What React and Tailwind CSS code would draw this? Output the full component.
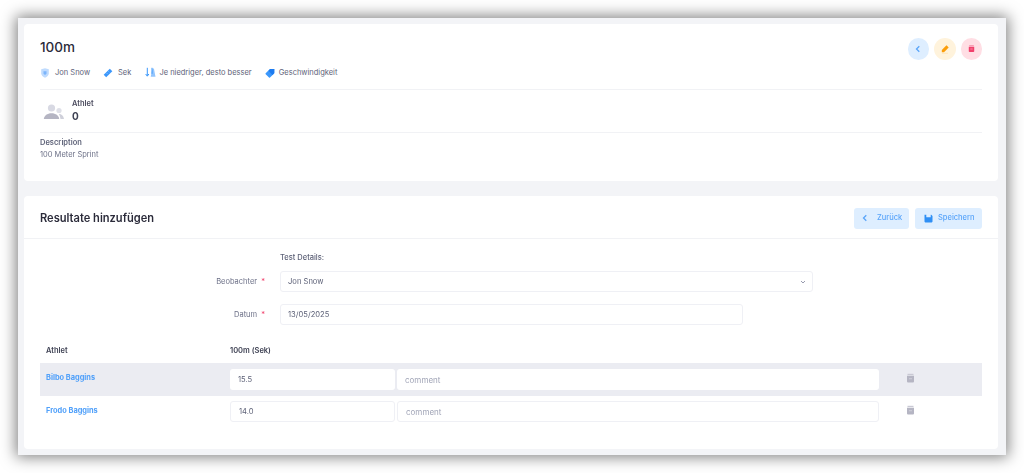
import React from "react";

const Shield = () => (
  <svg width="10" height="10" viewBox="0 0 10 10"><path d="M1.2 1.2 5 .3l3.8.9v4c0 2-1.8 3.6-3.8 4.5C3 8.800 1.200 7.200 1.200 5.200z" fill="#bfdbfe"/><path d="M3.500 3.200h3v2.600L5 7 3.500 5.800z" fill="#7cb5fb"/></svg>
);
const Ruler = () => (
  <svg width="10" height="10" viewBox="0 0 10 10"><path d="M6.800.7l2.500 2.500-6.100 6.100L.7 6.800z" fill="#3b97fb"/><path d="M5.300 3.300l1 1M3.600 5l1 1" stroke="#a8d2ff" strokeWidth=".6"/></svg>
);
const SortDown = () => (
  <svg width="11" height="11" viewBox="0 0 11 11" fill="none"><path d="M2.300.8v8M.7 7l1.600 2.200L3.900 7" stroke="#3b97fb" strokeWidth="1"/><path d="M5.700 9.800h4.800L8.900 1.500H7.500z" fill="#93c5fd"/><path d="M7 .8v6" stroke="#3b97fb" strokeWidth="1"/></svg>
);
const Tag = () => (
  <svg width="10" height="10" viewBox="0 0 10 10"><path d="M.7 5.300 4.900 1.100 9.300 1l-.1 4.400L5 9.600a.7.7 0 0 1-1 0L.7 6.300a.7.7 0 0 1 0-1z" fill="#3b97fb"/><path d="M5.200 1h4.100v4.100L7.500 6.900 3.500 2.800z" fill="#1d7bef"/></svg>
);
const Users = () => (
  <svg width="22" height="20" viewBox="0 0 22 20"><circle cx="8.500" cy="6" r="3.600" fill="#d8d9e3"/><circle cx="16" cy="8.500" r="2.600" fill="#dfe0e8"/><path d="M.8 17c.3-3.600 3.600-5.800 7.700-5.800S16 13.400 16.200 17z" fill="#b5b5c3"/><path d="M15.800 11.800c2.700.200 4.700 2 5.200 5.200h-3.500c-.2-2-.8-3.700-1.700-5.200z" fill="#cfd0da"/></svg>
);
const ChevL = ({ c = "#5aa5fa" }) => (
  <svg width="8" height="8" viewBox="0 0 8 8" fill="none"><path d="M5.300 1.300 2.500 4l2.800 2.700" stroke={c} strokeWidth="1.300"/></svg>
);
const Pencil = () => (
  <svg width="10" height="10" viewBox="0 0 10 10"><path d="M6.500 1.300l2.200 2.200-4.700 4.700H1.800V6z" fill="#fb9e0b"/><path d="M2 9.300h6" stroke="#ffe3b3" strokeWidth=".8"/></svg>
);
const Trash = ({ a = "#f1416c", b = "#f88aa5", w = 7, h = 9 }) => (
  <svg width={w} height={h} viewBox="0 0 9 10"><path d="M1 2.800h7v5.700a1 1 0 0 1-1 1H2a1 1 0 0 1-1-1z" fill={a}/><path d="M1.500.8h6v1.300h-6z" fill={b}/><path d="M3 5h3v1.300H3z" fill={b}/></svg>
);
const Save = () => (
  <svg width="9" height="9" viewBox="0 0 9 9"><path d="M.5.800h1.800v2.400h4.400V.8h.6L8.500 2v5.600a.8.800 0 0 1-.8.800H1.300a.8.800 0 0 1-.8-.8z" fill="#2f8ff5"/></svg>
);

const Meta = ({ icon, children, gap = "gap-[5px]", className = "" }) => (
  <div className={`flex items-center ${gap} ${className}`}>
    {icon}
    <span>{children}</span>
  </div>
);

const Round = ({ bg, children }) => (
  <div className={`w-[21.5px] h-[21.5px] rounded-full flex items-center justify-center ${bg}`}>{children}</div>
);

const Field = ({ className = "", value, placeholder, bordered }) => (
  <div className={`h-[21px] rounded-[3px] bg-white flex items-center px-[8px] ${bordered ? "border border-[#eff0f5]" : ""} ${placeholder ? "text-[8px] text-[#a1a5b7]" : "text-[7.6px] text-[#5e6278]"} ${className}`}>
    {value || placeholder}
  </div>
);

const Row = ({ name, value, shaded }) => (
  <div className={`h-[33px] flex items-center ${shaded ? "bg-[#ebecf2]" : "pb-[2px]"}`}>
    <div className={`w-[190px] pl-[6px] text-[7.4px] font-bold text-[#50a0fa] ${shaded ? "pb-[3px]" : "pb-[2px]"}`}>{name}</div>
    <Field className="w-[165px]" value={value} bordered={!shaded} />
    <Field className="w-[482px] ml-[2px]" placeholder="comment" bordered={!shaded} />
    <div className="ml-[27px] pb-[3px] flex">
      <Trash a="#b5b5c3" b="#c9c9d4" w={9} h={10} />
    </div>
  </div>
);

export default function App() {
  return (
    <div className="w-[1024px] h-[473px] bg-white p-[18px] font-['Inter','Liberation_Sans',sans-serif] overflow-hidden">
      <div className="h-[437px] bg-[#f3f4f7] pt-[6px] pl-[6px] pr-[8px] flex flex-col gap-[15px] shadow-[0_0_14px_2px_rgba(0,0,0,0.5)] blur-[0.5px]">
        <section className="h-[157px] bg-white rounded-[4px] px-[16px] pt-[14px] shrink-0">
          <div className="flex justify-between items-start">
            <h1 className="text-[13.5px] leading-[18px] font-medium text-[#2b2b3a]">100m</h1>
            <div className="flex gap-[5px]">
              <Round bg="bg-[#deeeff]"><ChevL /></Round>
              <Round bg="bg-[#fff3dc]"><Pencil /></Round>
              <Round bg="bg-[#ffdee4]"><Trash /></Round>
            </div>
          </div>
          <div className="mt-[3px] flex items-center gap-[13px] h-[20px] text-[7.5px] text-[#5e6278]">
            <Meta icon={<Shield />}>Jon Snow</Meta>
            <Meta icon={<Ruler />} gap="gap-[5px]">Sek</Meta>
            <Meta icon={<SortDown />} gap="gap-[3px]" className="ml-[1px]">Je niedriger, desto besser</Meta>
            <Meta icon={<Tag />} gap="gap-[4px]">Geschwindigkeit</Meta>
          </div>
          <div className="mt-[6px] h-[44px] border-y border-[#f1f2f5] flex items-center">
            <div className="ml-[3px] mt-[2px]"><Users /></div>
            <div className="ml-[7px]">
              <div className="text-[7.5px] leading-[11px] font-semibold text-[#4b4b5e]">Athlet</div>
              <div className="text-[10px] leading-[15px] font-bold text-[#3f4254]">0</div>
            </div>
          </div>
          <div className="mt-[4px] text-[7.5px] leading-[12px] font-semibold text-[#5e6278]">Description</div>
          <div className="text-[7.5px] leading-[12px] text-[#6c7087]">100 Meter Sprint</div>
        </section>

        <section className="h-[253px] bg-white rounded-[4px]">
          <div className="h-[43px] border-b border-[#f1f2f5] px-[16px] flex items-center justify-between">
            <h2 className="text-[11.1px] mt-[3px] font-semibold text-[#2b2b3a]">Resultate hinzufügen</h2>
            <div className="flex gap-[6px] text-[7.5px] font-medium text-[#5aa5fa] mt-[2px]">
              <button className="w-[55px] h-[21px] rounded-[3px] bg-[#deeeff] flex items-center pl-[7px] gap-[8px]"><ChevL />Zurück</button>
              <button className="w-[67px] h-[21px] rounded-[3px] bg-[#deeeff] flex items-center pl-[9px] gap-[5px]"><Save />Speichern</button>
            </div>
          </div>
          <div className="pt-[14px] px-[16px]">
            <div className="ml-[240px] text-[7.5px] leading-[10px] font-medium text-[#5e6278]">Test Details:</div>
            <div className="mt-[8px] flex items-center text-[7.5px] text-[#6c7087]">
              <div className="w-[225px] text-right">Beobachter <span className="text-[#f1416c] ml-[2px]">*</span></div>
              <div className="ml-[15px] w-[533px] h-[21px] rounded-[3px] border border-[#eff0f5] flex items-center justify-between pl-[7px] pr-[6px] text-[7.6px] text-[#5e6278]">
                Jon Snow
                <svg width="6" height="6" viewBox="0 0 6 6" fill="none"><path d="M1 2l2 2 2-2" stroke="#7e8299" strokeWidth=".8"/></svg>
              </div>
            </div>
            <div className="mt-[12px] flex items-center text-[7.5px] text-[#6c7087]">
              <div className="w-[225px] text-right">Datum <span className="text-[#f1416c] ml-[2px]">*</span></div>
              <div className="ml-[15px] w-[463px] h-[21px] rounded-[3px] border border-[#eff0f5] flex items-center px-[7px] text-[7.6px] text-[#5e6278]">13/05/2025</div>
            </div>
            <div className="mt-[15px] h-[23px] pb-[2px] flex items-center text-[7.5px] font-semibold text-[#3f4254]">
              <div className="w-[190px] pl-[6px]">Athlet</div>
              <div>100m (Sek)</div>
            </div>
            <Row name="Bilbo Baggins" value="15.5" shaded />
            <Row name="Frodo Baggins" value="14.0" />
          </div>
        </section>
      </div>
    </div>
  );
}
